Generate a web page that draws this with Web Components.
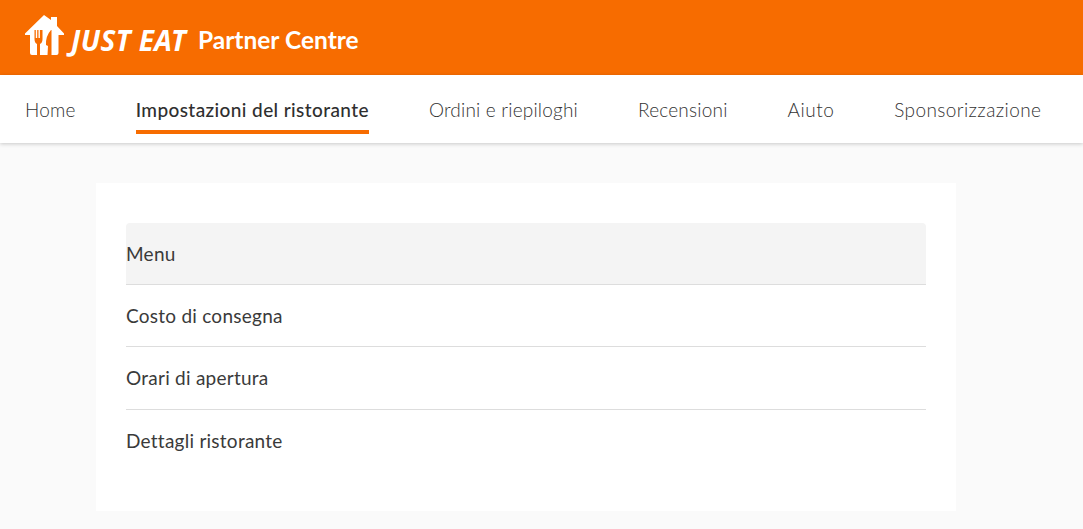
<!DOCTYPE html>
<html lang="it">
<head>
<meta charset="utf-8">
<title>Partner Centre</title>
<style>
	html, body { margin: 0; padding: 0; background: #fafafa; }
	body { font-family: Lato, "Noto Sans", sans-serif; color: #333; height: 529px; overflow: hidden; }
</style>
</head>
<body>
<pc-header></pc-header>
<pc-nav>
	<pc-nav-item>Home</pc-nav-item>
	<pc-nav-item active>Impostazioni del ristorante</pc-nav-item>
	<pc-nav-item>Ordini e riepiloghi</pc-nav-item>
	<pc-nav-item>Recensioni</pc-nav-item>
	<pc-nav-item style="letter-spacing: 0.5px">Aiuto</pc-nav-item>
	<pc-nav-item style="letter-spacing: 0.4px">Sponsorizzazione</pc-nav-item>
</pc-nav>
<pc-card>
	<pc-row active>Menu</pc-row>
	<pc-row>Costo di consegna</pc-row>
	<pc-row>Orari di apertura</pc-row>
	<pc-row last>Dettagli ristorante</pc-row>
</pc-card>
<script>
(function() {
	function define(name, html) {
		let template = document.createElement("template");
		template.innerHTML = html;
		customElements.define(name, class extends HTMLElement {
			constructor() {
				super();
				this.attachShadow({mode: "open"}).appendChild(template.content.cloneNode(true));
			}
		});
	}

	define("pc-header", `
		<style>
		:host {
			display: flex;
			align-items: center;
			height: 75px;
			padding-left: 25px;
			background: #f76c00;
			color: #fff;
		}
		svg { display: block; width: 39px; height: 40px; margin-top: -5px; }
		.brand {
			margin-left: 7px;
			font: italic 700 28px/1 "Noto Sans", sans-serif;
			letter-spacing: 0.4px;
			width: 118px;
			margin-top: 5px;
			white-space: nowrap;
		}
		.title {
			margin-left: 9px;
			margin-top: 5px;
			font: 700 24.5px/1 Lato, sans-serif;
			white-space: nowrap;
		}
		</style>
		<svg viewBox="25 15 39 40" aria-hidden="true">
			<path fill="#fff" d="M44 15 L51 20 V17 H57 V26 L64 33.500 V35 H58.500 V53 Q58.500 55 56.500 55 H32 Q30 55 30 53 V35 H25 V33.500 Z"/>
			<path fill="#f76c00" d="M34.500 30 H35.800 V38 H37.200 V30 H38.500 V38 H39.900 V30 H41.200 V30 H42.500 V39 Q42.500 43 40 44 V55 H37 V44 Q34.500 43 34.500 39 Z"/>
			<path fill="#f76c00" d="M51 30 Q45.500 36 46 45 L48 46 L47.500 55 H51.500 V30 Z"/>
		</svg>
		<span class="brand">JUST EAT</span>
		<span class="title">Partner Centre</span>
	`);

	define("pc-nav", `
		<style>
		:host {
			display: flex;
			gap: 60px;
			height: 68px;
			padding-left: 25px;
			background: #fff;
			box-shadow: 0 1px 4px rgba(0, 0, 0, 0.2);
			position: relative;
		}
		</style>
		<slot></slot>
	`);

	define("pc-nav-item", `
		<style>
		:host {
			display: block;
			box-sizing: border-box;
			height: 59px;
			padding-top: 22px;
			font-size: 19px;
			line-height: 26px;
			font-weight: 300;
			letter-spacing: 0.2px;
			color: #333;
			white-space: nowrap;
		}
		:host([active]) {
			font-weight: 500;
			letter-spacing: 0.4px;
			color: #2f2f2f;
			border-bottom: 4px solid #f76c00;
		}
		</style>
		<slot></slot>
	`);

	define("pc-card", `
		<style>
		:host {
			display: block;
			box-sizing: border-box;
			width: 860px;
			height: 328px;
			margin: 40px 0 0 96px;
			padding: 40px 30px;
			background: #fff;
		}
		</style>
		<slot></slot>
	`);

	define("pc-row", `
		<style>
		:host {
			display: block;
			height: 62.2px;
			line-height: 61px;
			font-size: 19px;
			letter-spacing: 0.25px;
			color: #3a3a3a;
			border-bottom: 1px solid #ddd;
			box-sizing: border-box;
		}
		:host([active]) {
			background: #f4f4f4;
			border-radius: 4px 4px 0 0;
		}
		:host([last]) { border-bottom: 0; }
		</style>
		<slot></slot>
	`);
})();
</script>
</body>
</html>
